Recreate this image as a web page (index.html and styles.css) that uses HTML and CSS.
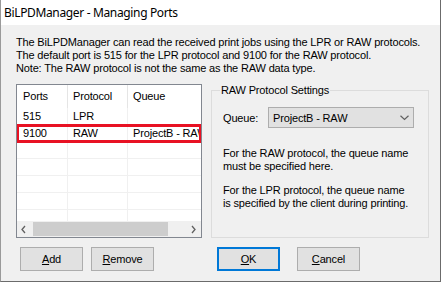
FILE: index.html
```html
<!DOCTYPE html>
<html lang="en">
<head>
    <title>BiLPDManager - Managing Ports</title>
    <link rel="stylesheet" href="styles.css">
</head>
<body>
    <div class="window">
        <div class="titlebar">BiLPDManager - Managing Ports</div>
        <div class="client">
            <p class="intro">The BiLPDManager can read the received print jobs using the LPR or RAW protocols.<br>
                The default port is 515 for the LPR protocol and 9100 for the RAW protocol.<br>
                Note: The RAW protocol is not the same as the RAW data type.</p>
            <div class="main">
                <div class="ports-list">
                    <div class="lv-row lv-header">
                        <span class="cell">Ports</span><span class="cell">Protocol</span><span class="cell">Queue</span>
                    </div>
                    <div class="lv-body">
                        <div class="lv-row"><span class="cell">515</span><span class="cell">LPR</span><span class="cell"></span></div>
                        <div class="lv-row"><span class="cell">9100</span><span class="cell">RAW</span><span class="cell">ProjectB - RAW</span></div>
                        <div class="lv-row"><span class="cell"></span><span class="cell"></span><span class="cell"></span></div>
                        <div class="lv-row"><span class="cell"></span><span class="cell"></span><span class="cell"></span></div>
                        <div class="lv-row"><span class="cell"></span><span class="cell"></span><span class="cell"></span></div>
                        <div class="lv-row"><span class="cell"></span><span class="cell"></span><span class="cell"></span></div>
                        <div class="lv-row"><span class="cell"></span><span class="cell"></span><span class="cell"></span></div>
                    </div>
                    <div class="hscroll">
                        <svg class="arrow" width="16" height="15" viewBox="0 0 16 15"><polyline points="8,4 5,7.5 8,11" fill="none" stroke="#606060" stroke-width="1.3"/></svg>
                        <div class="thumb"></div>
                        <svg class="arrow" width="16" height="15" viewBox="0 0 16 15"><polyline points="7,4 10,7.5 7,11" fill="none" stroke="#606060" stroke-width="1.3"/></svg>
                    </div>
                    <div class="mark"></div>
                </div>
                <fieldset class="group">
                    <legend>RAW Protocol Settings</legend>
                    <div class="queue-row">
                        <span class="queue-label">Queue:</span>
                        <div class="combo">
                            <span>ProjectB - RAW</span>
                            <svg width="9" height="6" viewBox="0 0 9 6"><polyline points="0.5,0.8 4.5,4.5 8.5,0.8" fill="none" stroke="#606060" stroke-width="1.2"/></svg>
                        </div>
                    </div>
                    <p class="note">For the RAW protocol, the queue name<br>must be specified here.</p>
                    <p class="note second">For the LPR protocol, the queue name<br>is specified by the client during printing.</p>
                </fieldset>
            </div>
            <div class="buttons">
                <button class="btn"><u>A</u>dd</button>
                <button class="btn"><u>R</u>emove</button>
                <button class="btn default"><u>O</u>K</button>
                <button class="btn"><u>C</u>ancel</button>
            </div>
        </div>
    </div>
</body>
</html>
```

FILE: styles.css
```css
body {
    margin: 0;
    font-family: "Liberation Sans", Arial, sans-serif;
    font-size: 11px;
    letter-spacing: -0.16px;
    color: #000;
}
.window {
    width: 441px;
    height: 282px;
    box-sizing: border-box;
    background-color: #f0f0f0;
    border-left: 1px solid #9a9a9a;
    border-right: 1px solid #6b6b6b;
    border-bottom: 1px solid #6b6b6b;
}
.titlebar {
    height: 25px;
    line-height: 25px;
    background-color: #fff;
    padding-left: 3px;
    font-family: "Noto Sans", "Liberation Sans", sans-serif;
    font-size: 12px;
    letter-spacing: -0.35px;
}
.client {
    padding: 11px 0 0 15px;
}
.intro {
    margin: 0;
    line-height: 13px;
}
.main {
    display: flex;
    margin-top: 9px;
}
.ports-list {
    position: relative;
    width: 186px;
    height: 154px;
    box-sizing: border-box;
    border: 1px solid #828790;
    background-color: #fff;
    overflow: hidden;
}
.lv-row {
    display: grid;
    grid-template-columns: 50px 60px 74px;
    height: 17px;
    line-height: 16px;
    box-sizing: border-box;
    border-bottom: 1px solid #f0f0f0;
}
.lv-row .cell {
    padding-left: 5px;
    white-space: nowrap;
    overflow: hidden;
    border-left: 1px solid #f0f0f0;
}
.lv-row .cell:first-child {
    padding-left: 6px;
    border-left: 0;
}
.lv-header {
    height: 23px;
    line-height: 23px;
    border-bottom: 0;
}
.lv-header .cell {
    border-left-color: #e5e5e5;
}
.lv-body {
    height: 113px;
    overflow: hidden;
}
.hscroll {
    display: flex;
    align-items: center;
    height: 16px;
    background-color: #f0f0f0;
}
.hscroll .arrow {
    flex: none;
}
.thumb {
    width: 135px;
    height: 14px;
    background-color: #cdcdcd;
}
.hscroll .arrow:last-child {
    margin-left: auto;
}
.mark {
    position: absolute;
    left: -1px;
    top: 39px;
    width: 186px;
    height: 19px;
    box-sizing: border-box;
    border: 3px solid #e81123;
}
.group {
    margin: 0 0 0 9px;
    padding: 0 10px 0 11px;
    width: 218px;
    height: 154px;
    box-sizing: border-box;
    border: 1px solid #dcdcdc;
}
.group legend {
    margin-left: -3px;
    padding: 0 1px;
    line-height: 13px;
}
.queue-row {
    display: flex;
    align-items: center;
    margin-top: 10px;
}
.queue-label {
    width: 45px;
}
.combo {
    display: flex;
    align-items: center;
    justify-content: space-between;
    width: 146px;
    height: 21px;
    box-sizing: border-box;
    padding: 0 4px 0 4px;
    background-color: #e1e1e1;
    border: 1px solid #adadad;
}
.note {
    margin: 19px 0 0 0;
    line-height: 13px;
}
.note.second {
    margin-top: 11px;
}
.buttons {
    display: flex;
    margin-top: 9px;
    padding-left: 4px;
}
.btn {
    width: 63px;
    height: 24px;
    margin: 0 8px 0 0;
    padding: 0;
    font-family: "Liberation Sans", Arial, sans-serif;
    font-size: 11px;
    letter-spacing: -0.16px;
    color: #000;
    background-color: #e1e1e1;
    border: 1px solid #adadad;
}
.btn.default {
    margin-left: 55px;
    margin-right: 17px;
    border: 2px solid #0078d7;
}
```
